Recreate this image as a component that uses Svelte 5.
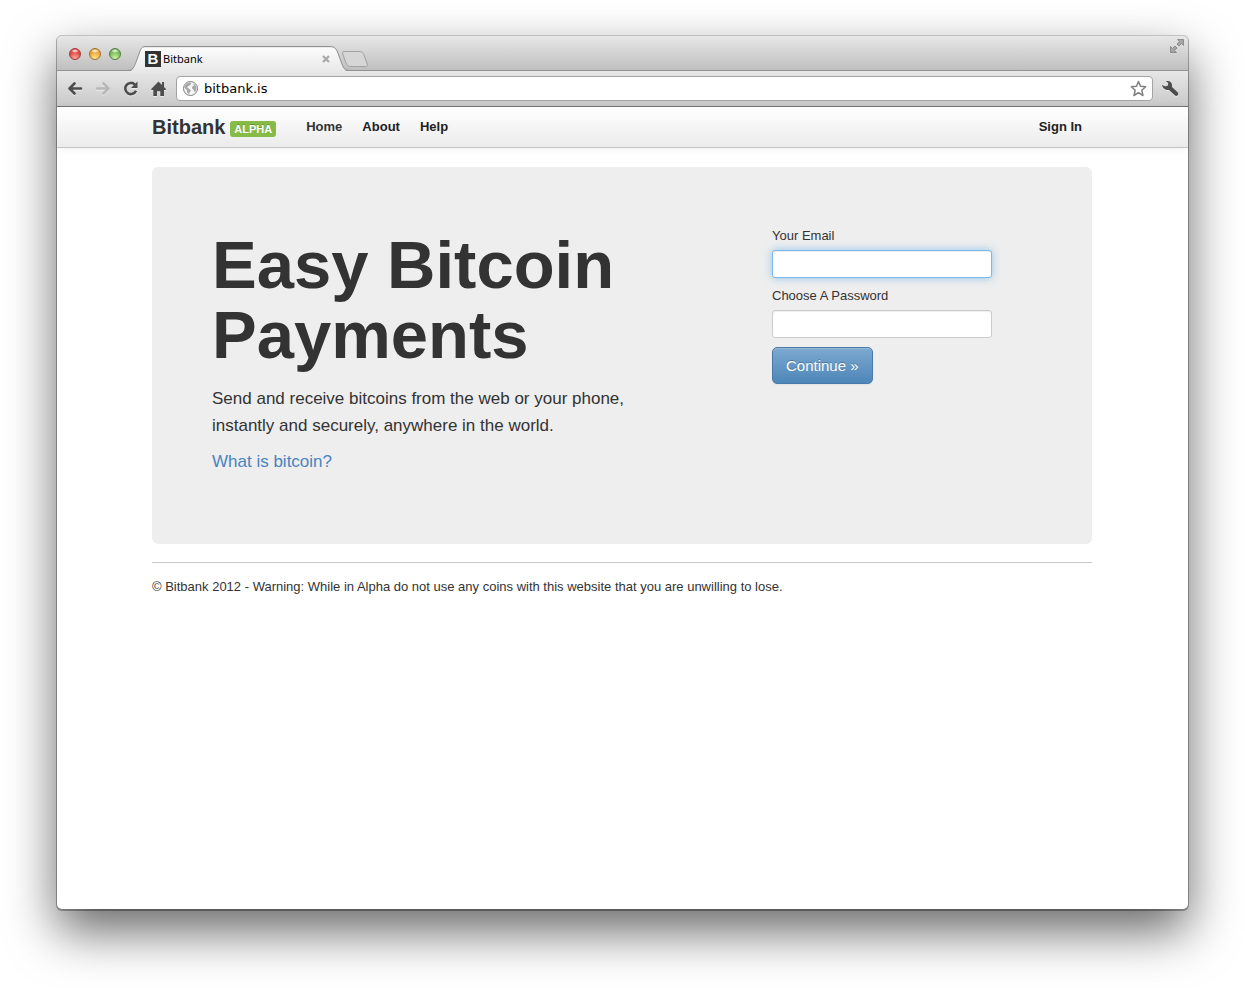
<script>
  let address = $state('bitbank.is');
  let email = $state('');
  let password = $state('');
  const links = ['Home', 'About', 'Help'];
</script>

<div class="desktop">
  <div class="window">
    <div class="titlebar">
      <div class="lights">
        <button class="light red" aria-label="Close window"></button>
        <button class="light amber" aria-label="Minimise window"></button>
        <button class="light green" aria-label="Zoom window"></button>
      </div>
      <div class="tab">
        <svg class="tab-shape" width="224" height="27" viewBox="0 0 224 27" aria-hidden="true">
          <defs>
            <linearGradient id="tabfill" x1="0" y1="0" x2="0" y2="1">
              <stop offset="0" stop-color="#fcfcfc" />
              <stop offset="1" stop-color="#e7e7e7" />
            </linearGradient>
          </defs>
          <path d="M0 27V25.500C5 25 6 22 8 17L12 6C13.500 2 15 1.500 18 1.500H202C206 1.500 208 3 209.500 7L214 19C216 24 217 25.500 224 25.500V27Z" fill="url(#tabfill)" />
          <path d="M0 24.500C5 24 6 21 8 16L12 5C13.500 1 15 .5 18 .5H202C206 .5 208 2 209.500 6L214 18C216 23 217 24.500 224 24.500" fill="none" stroke="#929292" />
        </svg>
        <span class="favicon">B</span>
        <span class="tab-title">Bitbank</span>
        <button class="tab-close" aria-label="Close tab">
          <svg width="8" height="8" viewBox="0 0 8 8"><path d="M1 1l6 6M7 1L1 7" stroke="#a9a9a9" stroke-width="2.200" /></svg>
        </button>
      </div>
      <button class="new-tab" aria-label="New tab">
        <svg width="28" height="18" viewBox="0 0 28 18">
          <path d="M3 1.500H18C21 1.500 22 2.500 23 5L26 13.500C26.700 15.500 26.500 16.500 25 16.500H10C7 16.500 6 15.500 5 13L1.800 4C1.200 2.300 1.500 1.500 3 1.500Z" fill="#d6d6d6" stroke="#a2a2a2" />
        </svg>
      </button>
      <button class="fullscreen" aria-label="Full screen">
        <svg width="16" height="16" viewBox="0 0 16 16">
          <path d="M8.500 1.500h6v6l-2-2-2.500 2.500-2-2 2.500-2.500zM1.500 8.500v6h6l-2-2L8 10 6 8 3.500 10.500z" fill="#a6a6a6" stroke="#808080" stroke-width=".8" />
        </svg>
      </button>
    </div>

    <div class="toolbar">
      <button class="tool" aria-label="Back">
        <svg width="16" height="16" viewBox="0 0 16 16"><path d="M14 7.500H3M7.500 2.500L2.500 7.500 7.500 12.500" fill="none" stroke="#4d4d4d" stroke-width="2.600" stroke-linecap="round" stroke-linejoin="round" /></svg>
      </button>
      <button class="tool" aria-label="Forward">
        <svg width="16" height="16" viewBox="0 0 16 16"><path d="M2 7.500h11M8.500 2.500L13.500 7.500 8.500 12.500" fill="none" stroke="#b8b8b8" stroke-width="2.600" stroke-linecap="round" stroke-linejoin="round" /></svg>
      </button>
      <button class="tool" aria-label="Reload">
        <svg width="16" height="16" viewBox="0 0 16 16"><path d="M11.800 3.500A5.600 5.600 0 1 0 13 9.800" fill="none" stroke="#4d4d4d" stroke-width="2.600" /><path d="M14.500 .5V7H8z" fill="#4d4d4d" /></svg>
      </button>
      <button class="tool" aria-label="Home page">
        <svg width="16" height="16" viewBox="0 0 16 16"><path d="M7.500 .5L11 4V1h2v5L15.200 8.200 14.400 9H13v6H9.300V10.200H6V15H2.300V9H.7L0 8.200z" fill="#4d4d4d" /></svg>
      </button>
      <div class="omnibox">
        <svg width="16" height="16" viewBox="0 0 16 16" aria-hidden="true">
          <circle cx="8.500" cy="7.500" r="7" fill="#f7f7f7" stroke="#808080" />
          <path d="M2.500 5L5 2.200 8.500 1.300 9.300 3 7.500 4.500 6 5.300 5.300 6.500 7.800 8.300 9 9.700 7.500 11.500 7.300 13.500 5 11.500 4.800 9 2.500 7zM11 2.500L13.300 3.700 14.700 7 13.500 10.500 12.300 11 11.500 8.500 10 7.500 10.300 5.300 12 4.500z" fill="#a8a8a8" />
        </svg>
        <input class="address" aria-label="Address" bind:value={address} />
        <button class="star" aria-label="Bookmark this page">
          <svg width="18" height="18" viewBox="0 0 18 18"><path d="M9.500 1.500L11.500 6.200 16.700 6.700 12.800 10.200 14 15.500 9.500 12.700 5 15.500 6.200 10.200 2.300 6.700 7.500 6.200z" fill="#fff" stroke="#808080" stroke-width="1.500" stroke-linejoin="round" /></svg>
        </button>
      </div>
      <button class="tool wrench" aria-label="Settings">
        <svg width="18" height="18" viewBox="0 0 18 18"><path d="M5 1.200C8 .3 10.800 2 11 5V7L16.800 12.500C18.300 14.500 16 17 14 15.600L8 10C5 10.500 1.500 8.500 1 5L4.300 6.500 7 5.500 7.200 3z" fill="#4d4d4d" /></svg>
      </button>
    </div>

    <header class="navbar">
      <a class="brand" href="#home">Bitbank</a>
      <span class="badge">ALPHA</span>
      <nav>
        {#each links as link, i}
          <a class:active={i === 0} href="#{link.toLowerCase()}">{link}</a>
        {/each}
      </nav>
      <a class="sign-in" href="#signin">Sign In</a>
    </header>

    <main>
      <section class="hero">
        <div class="copy">
          <h1>Easy Bitcoin Payments</h1>
          <p>Send and receive bitcoins from the web or your phone, instantly and securely, anywhere in the world.</p>
          <p><a href="#what">What is bitcoin?</a></p>
        </div>
        <form onsubmit={(e) => e.preventDefault()}>
          <label for="email">Your Email</label>
          <input id="email" class="field focused" type="text" bind:value={email} />
          <label for="password">Choose A Password</label>
          <input id="password" class="field" type="password" bind:value={password} />
          <button class="continue" type="submit">Continue »</button>
        </form>
      </section>
      <footer>© Bitbank 2012 - Warning: While in Alpha do not use any coins with this website that you are unwilling to lose.</footer>
    </main>
  </div>
</div>

<style>
  :global(body) {
    margin: 0;
    background: #fff;
  }
  .desktop {
    box-sizing: border-box;
    min-height: 100vh;
    padding: 35px 57px 79px;
    display: flex;
    overflow: hidden;
    font: 13px/18px 'Liberation Sans', Arial, sans-serif;
    color: #333;
  }
  .window {
    flex: 1;
    min-width: 0;
    border-radius: 5px;
    background: #fff;
    box-shadow:
      0 1px 0 1px rgba(0, 0, 0, 0.3),
      0 22px 50px rgba(0, 0, 0, 0.6);
  }
  button {
    margin: 0;
    padding: 0;
    border: 0;
    background: none;
    font: inherit;
  }
  a {
    color: inherit;
    text-decoration: none;
  }
  svg {
    display: block;
  }

  .titlebar {
    display: flex;
    align-items: flex-end;
    height: 35px;
    border-bottom: 1px solid #929292;
    border-radius: 5px 5px 0 0;
    background: linear-gradient(#e8e8e8, #bfbfbf);
    box-shadow: inset 0 1px #c0c0c0;
  }
  .lights {
    display: flex;
    gap: 8px;
    padding: 0 7px 10px 12px;
  }
  .light {
    width: 12px;
    height: 12px;
    border: 1px solid;
    border-radius: 50%;
  }
  .red {
    border-color: #9c3b39;
    background: radial-gradient(ellipse 4px 2px at 50% 20%, #fff, transparent), radial-gradient(circle at 50% 90%, #ffaca4, #df4744 60%);
  }
  .amber {
    border-color: #a26d28;
    background: radial-gradient(ellipse 4px 2px at 50% 20%, #fff, transparent), radial-gradient(circle at 50% 90%, #ffe989, #eda43b 60%);
  }
  .green {
    border-color: #4f7e3d;
    background: radial-gradient(ellipse 4px 2px at 50% 20%, #fff, transparent), radial-gradient(circle at 50% 90%, #d3f5a8, #79b957 60%);
  }
  .tab {
    position: relative;
    display: flex;
    align-items: center;
    box-sizing: border-box;
    width: 224px;
    height: 25px;
    margin-bottom: -1px;
    padding: 0 19px 0 17px;
  }
  .tab-shape {
    position: absolute;
    left: 0;
    top: 0;
  }
  .favicon {
    position: relative;
    width: 16px;
    height: 16px;
    background: #333;
    color: #fff;
    font-size: 15px;
    line-height: 16px;
    font-weight: bold;
    text-align: center;
  }
  .tab-title {
    position: relative;
    flex: 1;
    padding-left: 2px;
    color: #000;
    font: 11px/16px 'Noto Sans', sans-serif;
  }
  .tab-close {
    position: relative;
    margin-right: 3px;
  }
  .new-tab {
    margin: 0 0 2px -11px;
    position: relative;
  }
  .fullscreen {
    margin: 0 3px 16px auto;
  }

  .toolbar {
    display: flex;
    align-items: center;
    gap: 12px;
    height: 35px;
    padding: 0 9px 0 10px;
    border-bottom: 1px solid #757575;
    background: linear-gradient(#e7e7e7, #c9c9c9);
  }
  .tool {
    filter: drop-shadow(0 1px 0 rgba(255, 255, 255, 0.5));
  }
  .omnibox {
    flex: 1;
    display: flex;
    align-items: center;
    gap: 6px;
    box-sizing: border-box;
    min-width: 0;
    height: 25px;
    margin: 0 -4px 0 -3px;
    padding: 0 5px;
    border: 1px solid #a3a3a3;
    border-radius: 4px;
    background: #fff;
  }
  .address {
    flex: 1;
    min-width: 0;
    padding: 0;
    border: 0;
    outline: 0;
    background: none;
    color: #000;
    font: 13px/18px 'DejaVu Sans', sans-serif;
  }

  .navbar {
    display: flex;
    align-items: center;
    height: 40px;
    padding: 0 106px 0 95px;
    border-bottom: 1px solid #c4c4c4;
    background: linear-gradient(#fff, #ebebeb);
    box-shadow: 0 1px 8px rgba(0, 0, 0, 0.06);
    color: #222;
    font-weight: bold;
  }
  .brand {
    color: #333;
    font-size: 20px;
    line-height: 20px;
  }
  .badge {
    margin: 4px 0 0 5px;
    padding: 1px 4px;
    border-radius: 3px;
    background: #86bc46;
    color: #fff;
    font-size: 11px;
    line-height: 14px;
    text-shadow: 0 -1px rgba(0, 0, 0, 0.25);
  }
  nav {
    display: flex;
    gap: 20px;
    margin-left: 30px;
  }
  .active {
    color: #333;
  }
  .sign-in {
    margin-left: auto;
  }

  main {
    padding: 19px 96px 40px 95px;
  }
  .hero {
    display: flex;
    justify-content: space-between;
    padding: 60px 100px 60px 60px;
    border-radius: 6px;
    background: #eee;
  }
  .copy {
    max-width: 440px;
    padding-top: 3px;
    font-size: 17px;
    line-height: 27px;
  }
  h1 {
    margin: 0 0 15px;
    font-size: 67px;
    line-height: 70px;
  }
  p {
    margin: 0 0 9px;
  }
  p a {
    color: #4a83c0;
  }
  form {
    display: flex;
    flex-direction: column;
    align-items: flex-start;
    width: 220px;
  }
  label {
    margin-bottom: 5px;
  }
  .field {
    box-sizing: border-box;
    width: 100%;
    height: 28px;
    margin: 0 0 9px;
    padding: 4px;
    border: 1px solid #ccc;
    border-radius: 3px;
    outline: 0;
    background: #fff;
    box-shadow: inset 0 1px 1px rgba(0, 0, 0, 0.075);
    font: inherit;
  }
  .focused {
    border-color: #7db8ea;
    box-shadow:
      inset 0 1px 1px rgba(0, 0, 0, 0.075),
      0 0 8px rgba(82, 168, 236, 0.6);
  }
  .continue {
    padding: 9px 13px 8px;
    border: 1px solid #4a7aa8;
    border-radius: 5px;
    background: linear-gradient(#7ca9cf, #4d86b9);
    box-shadow:
      inset 0 1px rgba(255, 255, 255, 0.2),
      0 1px 2px rgba(0, 0, 0, 0.05);
    color: #fff;
    font-size: 15px;
    text-shadow: 0 -1px rgba(0, 0, 0, 0.25);
  }
  footer {
    margin-top: 18px;
    padding-top: 15px;
    border-top: 1px solid #c8c8c8;
  }
</style>
